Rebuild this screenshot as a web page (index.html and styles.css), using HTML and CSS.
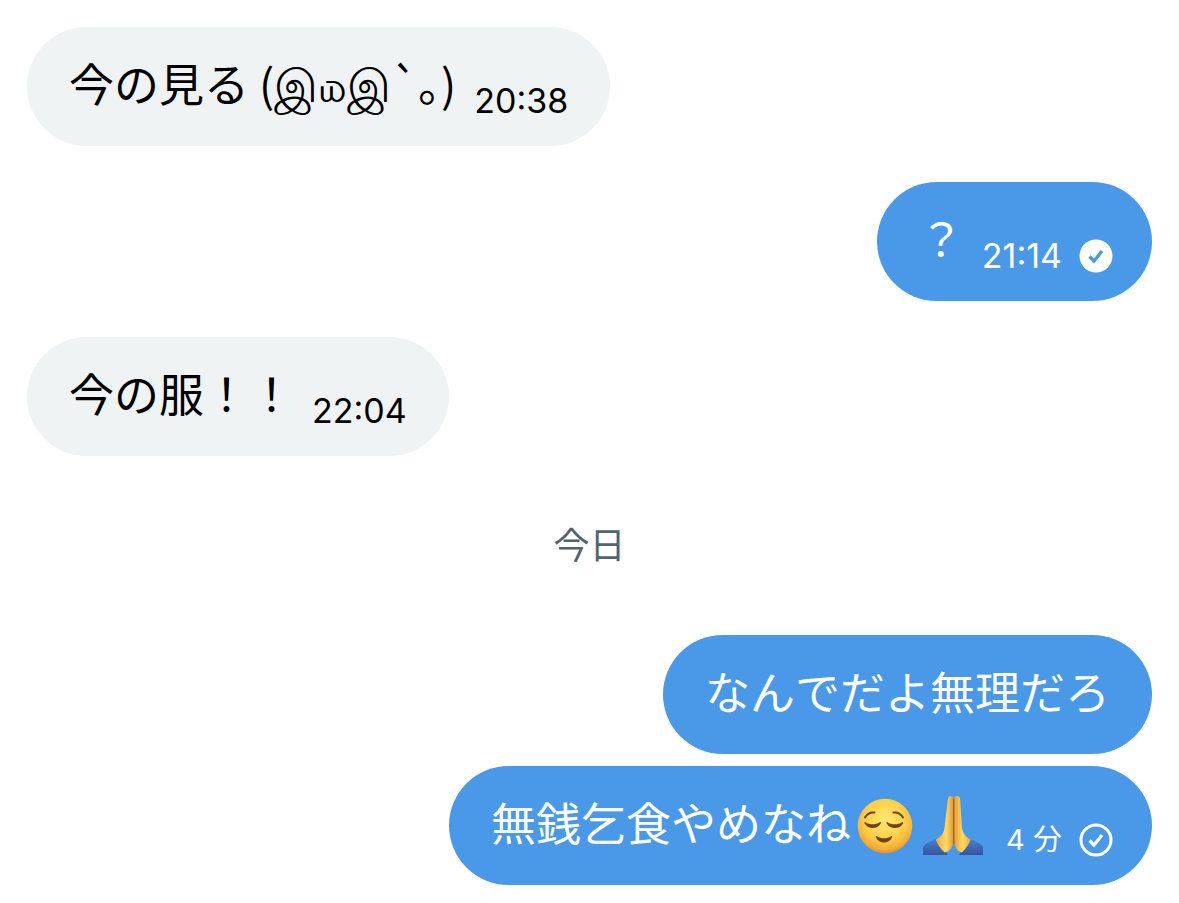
FILE: index.html
```html
<!DOCTYPE html>
<html lang="ja">
<head>
    <meta charset="UTF-8">
    <meta name="viewport" content="width=device-width, initial-scale=1.0">
    <title>メッセージ</title>
    <link rel="stylesheet" href="styles.css">
</head>
<body>
    <main class="chat">
        <div class="bubble received">
            <p class="text">今の見る (இ௰இ`｡)</p>
            <time class="time">20:38</time>
        </div>

        <div class="bubble sent">
            <p class="text">？</p>
            <time class="time">21:14</time>
            <svg class="status" viewBox="0 0 34 34" role="img" aria-label="既読">
                <circle cx="17" cy="17" r="16.5" fill="#fff"/>
                <path d="M10.500 17.500l4.500 4.500L23 12" fill="none" stroke="#4a99e9" stroke-width="3.2"/>
            </svg>
        </div>

        <div class="bubble received">
            <p class="text">今の服！！</p>
            <time class="time">22:04</time>
        </div>

        <h2 class="day">今日</h2>

        <div class="group">
            <div class="bubble sent">
                <p class="text">なんでだよ無理だろ</p>
            </div>
            <div class="bubble sent">
                <p class="text">無銭乞食やめなね</p>
                <div class="emojis">
                    <svg class="emoji" viewBox="0 0 60 60" role="img" aria-label="ほっとした顔">
                        <defs>
                            <radialGradient id="face" cx="50%" cy="38%" r="62%">
                                <stop offset="0" stop-color="#ffe873"/>
                                <stop offset="0.6" stop-color="#fdcf49"/>
                                <stop offset="0.88" stop-color="#f5ae35"/>
                                <stop offset="1" stop-color="#e28f2b"/>
                            </radialGradient>
                        </defs>
                        <circle cx="30" cy="30" r="27.3" fill="url(#face)"/>
                        <g fill="none" stroke="#70420f" stroke-linecap="round">
                            <path d="M10 21.500c2-3.500 5.500-5.500 9.500-5" stroke-width="2"/>
                            <path d="M38.500 16.500c4-.5 7.500 1.500 9.500 5" stroke-width="2"/>
                        </g>
                        <g fill="#70420f">
                            <path d="M10.500 26.200c3.500 2.800 10.500 2.800 14.200 0 .8-.6 1.600.2 1 1.200-3.200 6-12.800 6-16 0-.6-1 0-1.900.8-1.200z"/>
                            <path d="M32.500 26.200c3.700 2.800 10.700 2.800 14.500 0 .8-.6 1.600.2 1 1.200-3.200 6-13 6-16.300 0-.6-1 0-1.900.8-1.200z"/>
                            <path d="M22 40.200c3.800 2.800 10.200 2.800 14 0 .9-.6 1.600.2 1 1.300-3 6.800-13 6.800-16 0-.6-1.100.1-1.900 1-1.300z"/>
                        </g>
                    </svg>
                    <svg class="emoji" viewBox="0 0 60 60" role="img" aria-label="合わせた手">
                        <defs>
                            <linearGradient id="handLeft" x1="0" x2="1">
                                <stop offset="0" stop-color="#f0a93a"/>
                                <stop offset="0.6" stop-color="#ffdb63"/>
                                <stop offset="1" stop-color="#e09a38"/>
                            </linearGradient>
                            <linearGradient id="handRight" x1="0" x2="1">
                                <stop offset="0" stop-color="#e69c32"/>
                                <stop offset="0.5" stop-color="#ffdb63"/>
                                <stop offset="1" stop-color="#eea638"/>
                            </linearGradient>
                            <linearGradient id="sleeve" x1="0" y1="0" x2="0" y2="1">
                                <stop offset="0" stop-color="#4c82d2"/>
                                <stop offset="1" stop-color="#34569c"/>
                            </linearGradient>
                        </defs>
                        <path d="M0 51c1.500-3.500 8-5.500 14-9L25 59H0z" fill="url(#sleeve)"/>
                        <path d="M60 51c-1.500-3.500-8-5.500-14-9L36 59h24z" fill="url(#sleeve)"/>
                        <path d="M25 2.500c.6-3.300 5.200-3.300 5.200 0V45c0 6-3 10-8.500 11.500-3.500-3-7-7.500-9-13C18 41 20.500 38 21.500 32z" fill="url(#handLeft)"/>
                        <path d="M37 2.500c-.6-3.300-5.800-3.300-5.800 0V45c0 6 3 10 7.500 11.500 3.500-3 7-7.500 9-13C43 41 40 38 39 32z" fill="url(#handRight)"/>
                        <path d="M30.700 3v45" fill="none" stroke="#a8621c" stroke-width="1.200"/>
                    </svg>
                </div>
                <time class="time relative">4 分</time>
                <svg class="status" viewBox="0 0 34 34" role="img" aria-label="送信済み">
                    <circle cx="17" cy="17" r="15" fill="none" stroke="#fff" stroke-width="3"/>
                    <path d="M10.500 17.500l4.500 4.500L23 12" fill="none" stroke="#fff" stroke-width="3.2"/>
                </svg>
            </div>
        </div>
    </main>
</body>
</html>
```
FILE: styles.css
```css
body{
    margin: 0;
    background: #fff;
    font-family: Inter, "Noto Sans CJK JP", sans-serif;
}
.chat{
    display: flex;
    flex-direction: column;
    gap: 36px;
    padding: 27px 27px 18px;
}
.bubble{
    display: flex;
    align-items: flex-end;
    padding: 17px 42px 24px;
    border-radius: 60px;
}
.received{
    align-self: flex-start;
    background: #eff3f4;
    color: #000;
}
.sent{
    align-self: flex-end;
    background: #4a99e9;
    color: #fff;
}
.text{
    margin: 0;
    font-family: "Noto Sans CJK JP", sans-serif;
    font-size: 45px;
    font-kerning: none;
    line-height: 78px;
}
.time{
    margin-left: 18px;
    font-size: 34px;
    line-height: 42px;
    white-space: nowrap;
}
.relative{
    font-size: 29px;
}
.status{
    flex: none;
    width: 34px;
    height: 34px;
    margin: 0 -3px 4px 17px;
}
.day{
    margin: 27px 0 26px;
    color: #536471;
    font-size: 36px;
    font-weight: 400;
    line-height: 54px;
    text-align: center;
}
.group{
    display: flex;
    flex-direction: column;
    gap: 12px;
}
.emojis{
    display: flex;
    gap: 8px;
    margin: 0 5px 5px 4px;
}
.emoji{
    width: 60px;
    height: 60px;
}
```
